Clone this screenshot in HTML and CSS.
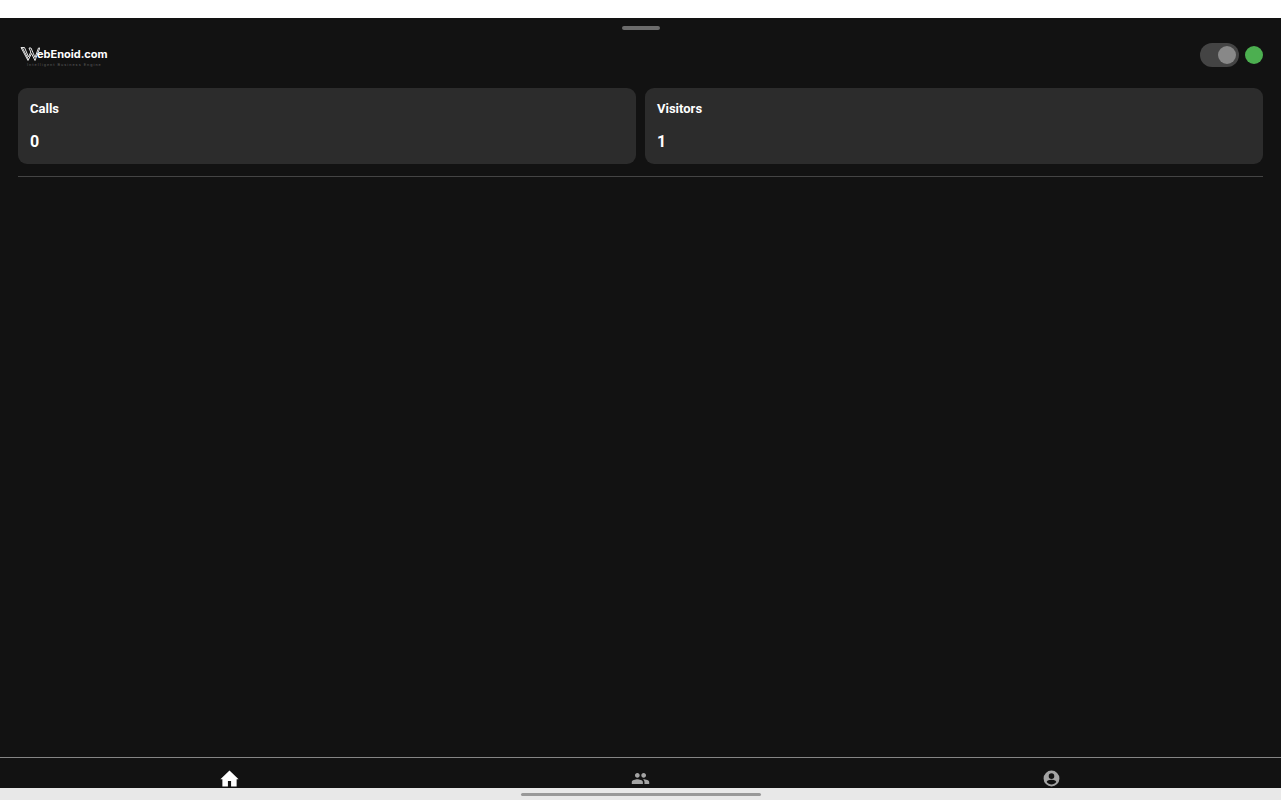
FILE: index.html
```html
<!DOCTYPE html>
<html lang="en">
<head>
<meta charset="utf-8">
<meta name="viewport" content="width=device-width, initial-scale=1">
<title>WebEnoid.com</title>
<link rel="stylesheet" href="styles.css">
</head>
<body>
<div class="status-bar"></div>
<div class="app">
  <div class="handle"></div>
  <header class="header">
    <a class="logo" href="#" aria-label="WebEnoid.com">
      <span class="wordmark">
        <svg class="logo-w" viewBox="0 0 20 16" aria-hidden="true">
          <path d="M1 1.500H4.500L8.500 11L10.800 6L9 2H11L15 11.500L18.500 2H19.800L15 14.500L11.500 7.500L8 14.500Z M2.500 2L8.200 13"/>
        </svg>
        <span class="name">ebEnoid.com</span>
      </span>
      <span class="tagline">Intelligent Business Engine</span>
    </a>
    <div class="status">
      <input class="switch" type="checkbox" role="switch" aria-label="Availability" checked>
      <span class="online"></span>
    </div>
  </header>
  <main class="main">
    <div class="cards">
      <section class="card">
        <h2 class="label">Calls</h2>
        <p class="value">0</p>
      </section>
      <section class="card">
        <h2 class="label">Visitors</h2>
        <p class="value">1</p>
      </section>
    </div>
  </main>
  <nav class="tabs">
    <a class="tab active" href="#" aria-label="Home">
      <svg viewBox="0 0 24 24"><path d="M10 22v-7h4v7h7v-9h2.500L12 2 .5 13H3v9z"/></svg>
    </a>
    <a class="tab" href="#" aria-label="Visitors">
      <svg viewBox="0 0 24 24"><path d="M16 11c1.660 0 2.990-1.340 2.990-3S17.660 5 16 5s-3 1.340-3 3 1.340 3 3 3zm-8 0c1.660 0 2.990-1.340 2.990-3S9.660 5 8 5 5 6.340 5 8s1.340 3 3 3zm0 2c-2.330 0-7 1.170-7 3.500V19h14v-2.500C15 14.170 10.330 13 8 13zm8 0c-.290 0-.620.020-.970.050C16.190 13.890 17 15.020 17 16.500V19h6v-2.500c0-2.330-4.670-3.500-7-3.500z"/></svg>
    </a>
    <a class="tab" href="#" aria-label="Account">
      <svg viewBox="0 0 24 24"><path d="M12 2a10 10 0 1 0 0 20 10 10 0 0 0 0-20zm0 3.500a3.500 3.500 0 1 1 0 7 3.500 3.500 0 0 1 0-7zm0 14c-2.500 0-4.700-1.200-6-3.200.1-1.900 4-2.800 6-2.800s5.900.9 6 2.800c-1.300 2-3.500 3.200-6 3.200z"/></svg>
    </a>
  </nav>
</div>
<footer class="gesture-bar"><span class="gesture-pill"></span></footer>
</body>
</html>
```
FILE: styles.css
```css
* {
  box-sizing: border-box;
}

body {
  margin: 0;
  min-height: 100vh;
  display: flex;
  flex-direction: column;
  background: #121212;
  color: #fff;
  font-family: Roboto, sans-serif;
}

.status-bar {
  height: 18px;
  background: #fff;
}

.app {
  flex: 1;
  display: flex;
  flex-direction: column;
}

.handle {
  width: 38px;
  height: 4px;
  margin: 8px auto 0;
  border-radius: 2px;
  background: #6c6c6c;
}

.header {
  display: flex;
  align-items: center;
  justify-content: space-between;
  height: 50px;
  padding: 0 18px 0 20px;
}

.logo {
  display: flex;
  flex-direction: column;
  padding-top: 3px;
  color: #fff;
  text-decoration: none;
}

.wordmark {
  display: flex;
  align-items: center;
  height: 16px;
}

.logo-w {
  width: 20px;
  height: 16px;
  margin-right: -3px;
  fill: none;
  stroke: #e4e4e4;
  stroke-width: 1;
}

.name {
  font: 700 11px/16px Inter, sans-serif;
}

.tagline {
  padding-left: 7px;
  color: #5c5c5c;
  font: 400 4px/6px Roboto, sans-serif;
  letter-spacing: 1px;
}

.status {
  display: flex;
  align-items: center;
  gap: 6px;
}

.switch {
  appearance: none;
  display: flex;
  align-items: center;
  justify-content: flex-end;
  width: 39px;
  height: 24px;
  margin: 0;
  padding-right: 3px;
  border-radius: 12px;
  background: #444;
}

.switch::before {
  content: "";
  width: 18px;
  height: 18px;
  border-radius: 50%;
  background: #888;
}

.online {
  width: 18px;
  height: 18px;
  border-radius: 50%;
  background: #4caf50;
}

.main {
  flex: 1;
  padding: 8px 18px;
}

.cards {
  display: grid;
  grid-template-columns: 1fr 1fr;
  gap: 9px;
  padding-bottom: 12px;
  border-bottom: 1px solid #444;
}

.card {
  padding: 12px;
  border-radius: 9px;
  background: #2c2c2c;
}

.label {
  margin: 0 0 14px;
  font-size: 13px;
  line-height: 18px;
  font-weight: 700;
}

.value {
  margin: 0;
  font-size: 16px;
  line-height: 20px;
  font-weight: 700;
}

.tabs {
  display: flex;
  justify-content: space-between;
  padding: 11px 220px 0;
  border-top: 1px solid #858585;
}

.tab {
  height: 19px;
  color: #a4a4a4;
}

.tab svg {
  display: block;
  width: 19px;
  height: 19px;
  fill: currentColor;
}

.active {
  color: #fff;
}

.gesture-bar {
  display: flex;
  justify-content: center;
  height: 12px;
  padding-top: 5px;
  background: #e8e8e8;
}

.gesture-pill {
  width: 240px;
  height: 3px;
  border-radius: 2px;
  background: #999;
}
```
